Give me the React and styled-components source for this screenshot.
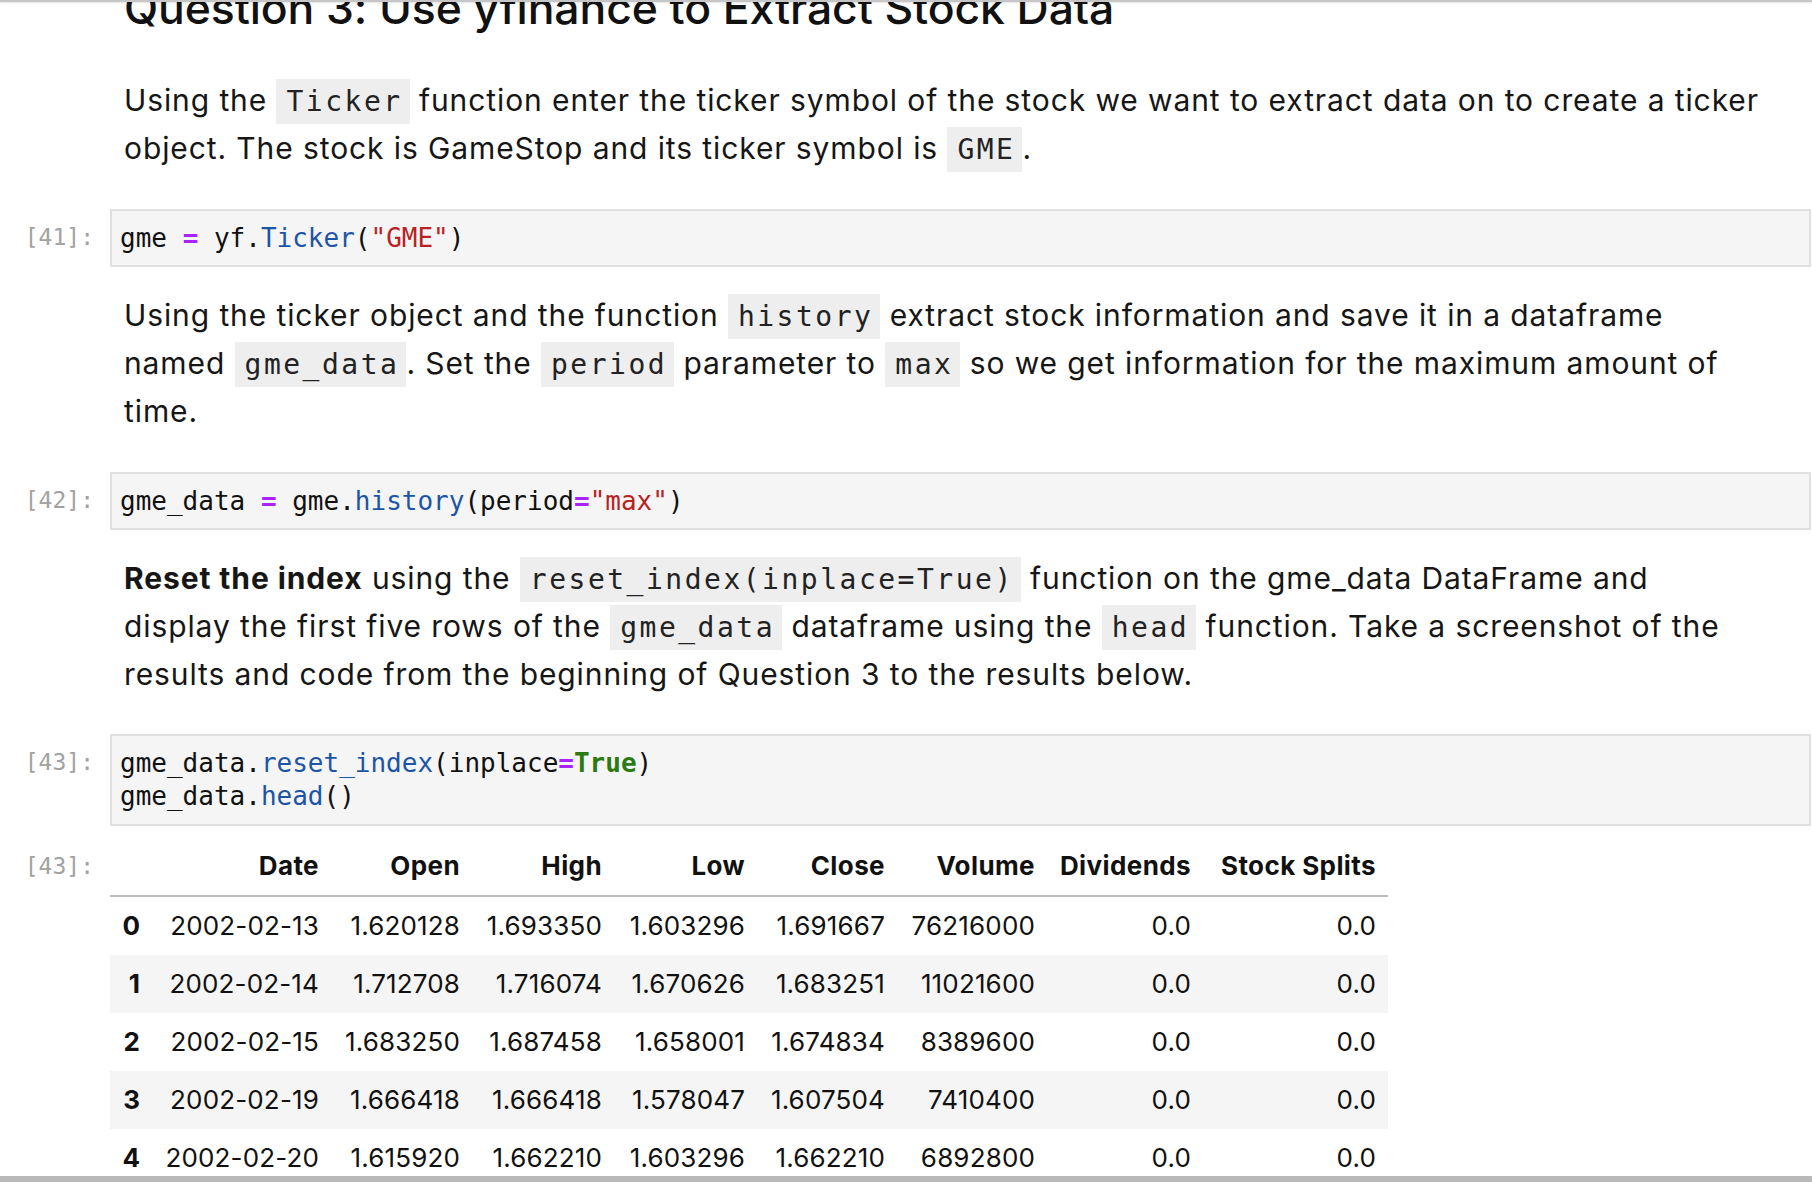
import React from 'react';
import styled, { createGlobalStyle } from 'styled-components';

const GlobalStyle = createGlobalStyle`
  html, body {
    margin: 0;
    padding: 0;
    background: #ffffff;
  }
  body {
    font-family: Inter, "Noto Sans", sans-serif;
    color: #161616;
  }
`;

const Page = styled.div`
  width: 1812px;
  height: 1182px;
  display: flex;
  flex-direction: column;
  overflow: hidden;
  background: #ffffff;
`;

const TopEdge = styled.div`
  flex: 0 0 2px;
  background: #c6c6c6;
  box-shadow: 0 1px 2px rgba(0, 0, 0, 0.12);
  position: relative;
  z-index: 1;
`;

const BottomEdge = styled.div`
  flex: 0 0 6px;
  background: #b9b9b9;
  position: relative;
  z-index: 1;
`;

const Notebook = styled.div`
  flex: 1;
  overflow: hidden;
  padding-right: 1px;
`;

const Stack = styled.div`
  margin-top: -21px;
  display: flex;
  flex-direction: column;
`;

const Cell = styled.div`
  display: grid;
  grid-template-columns: 110px 1fr;
  align-items: start;
  padding-top: ${(p) => p.$top || 0}px;
  padding-bottom: ${(p) => p.$bottom || 0}px;
`;

const Prompt = styled.div`
  font-family: "DejaVu Sans Mono", monospace;
  font-size: 23px;
  line-height: 32px;
  color: #a2a2a2;
  text-align: right;
  padding-right: 16px;
  padding-top: ${(p) => p.$offset || 0}px;
  white-space: nowrap;
`;

const Markdown = styled.div`
  padding-left: 14px;
  white-space: nowrap;
`;

const Heading = styled.h2`
  margin: 0 0 40px 0;
  font-size: 44.5px;
  line-height: 55px;
  font-weight: 500;
  color: #111;
  letter-spacing: -0.1px;
`;

const Para = styled.p`
  margin: 0;
  font-size: 30px;
  line-height: 48px;
  letter-spacing: 0.9px;
  color: #161616;
`;

const Strong = styled.strong`
  font-weight: 700;
`;

const Chip = styled.code`
  font-family: "DejaVu Sans Mono", monospace;
  font-size: 28px;
  line-height: 30px;
  letter-spacing: 2.5px;
  background: #eeeeee;
  padding: 6px 7px 6px 10px;
  color: #222;
`;

const CodeBox = styled.pre`
  margin: 0;
  background: #f5f5f5;
  border: 2px solid #e0e0e0;
  padding: 10.5px 8px 10px 8px;
  font-family: "DejaVu Sans Mono", monospace;
  font-size: 26px;
  line-height: 33.5px;
  color: #111;
`;

const tokenColors = {
  op: '#aa22ff',
  fn: '#1c55a6',
  str: '#ba2121',
  kw: '#2c7a12',
};

const Tok = styled.span`
  color: ${(p) => tokenColors[p.$k] || '#111'};
  font-weight: ${(p) => (p.$k === 'op' || p.$k === 'kw' ? 700 : 400)};
`;

const Table = styled.table`
  border-collapse: collapse;
  table-layout: fixed;
  width: 1278px;
  font-family: Inter, "Noto Sans", sans-serif;
  font-size: 26px;
  color: #111;
`;

const Col = styled.col`
  width: ${(p) => p.$w}px;
`;

const HeadCell = styled.th`
  height: 58px;
  padding: 0 12px;
  text-align: right;
  font-weight: 700;
  letter-spacing: 0.4px;
  white-space: nowrap;
  border-bottom: 2px solid #bdbdbd;
  vertical-align: middle;
`;

const Row = styled.tr`
  background: ${(p) => (p.$odd ? '#f5f5f5' : '#ffffff')};
`;

const IndexCell = styled.th`
  height: 58px;
  padding: 0 12px;
  text-align: right;
  font-weight: 700;
  vertical-align: middle;
`;

const DataCell = styled.td`
  height: 58px;
  padding: 0 12px;
  text-align: right;
  letter-spacing: 0.15px;
  white-space: nowrap;
  vertical-align: middle;
`;

const columns = [
  { name: '', w: 42 },
  { name: 'Date', w: 179 },
  { name: 'Open', w: 141 },
  { name: 'High', w: 142 },
  { name: 'Low', w: 143 },
  { name: 'Close', w: 140 },
  { name: 'Volume', w: 150 },
  { name: 'Dividends', w: 156 },
  { name: 'Stock Splits', w: 185 },
];

const rows = [
  ['2002-02-13', '1.620128', '1.693350', '1.603296', '1.691667', '76216000', '0.0', '0.0'],
  ['2002-02-14', '1.712708', '1.716074', '1.670626', '1.683251', '11021600', '0.0', '0.0'],
  ['2002-02-15', '1.683250', '1.687458', '1.658001', '1.674834', '8389600', '0.0', '0.0'],
  ['2002-02-19', '1.666418', '1.666418', '1.578047', '1.607504', '7410400', '0.0', '0.0'],
  ['2002-02-20', '1.615920', '1.662210', '1.603296', '1.662210', '6892800', '0.0', '0.0'],
];

function DataFrame() {
  return (
    <Table>
      <colgroup>
        {columns.map((c, i) => (
          <Col key={i} $w={c.w} />
        ))}
      </colgroup>
      <thead>
        <tr>
          {columns.map((c, i) => (
            <HeadCell key={i}>{c.name}</HeadCell>
          ))}
        </tr>
      </thead>
      <tbody>
        {rows.map((r, i) => (
          <Row key={i} $odd={i % 2 === 1}>
            <IndexCell>{i}</IndexCell>
            {r.map((v, j) => (
              <DataCell key={j}>{v}</DataCell>
            ))}
          </Row>
        ))}
      </tbody>
    </Table>
  );
}

export default function App() {
  return (
    <Page>
      <GlobalStyle />
      <TopEdge />
      <Notebook>
        <Stack>
          <Cell $bottom={37}>
            <div />
            <Markdown>
              <Heading>Question 3: Use yfinance to Extract Stock Data</Heading>
              <Para>
                Using the <Chip>Ticker</Chip> function enter the ticker symbol of the stock we want to extract data on to create a ticker
                <br />
                object. The stock is GameStop and its ticker symbol is <Chip>GME</Chip>.
              </Para>
            </Markdown>
          </Cell>

          <Cell>
            <Prompt $offset={12}>[41]:</Prompt>
            <CodeBox>
              gme <Tok $k="op">=</Tok> yf.<Tok $k="fn">Ticker</Tok>(<Tok $k="str">"GME"</Tok>)
            </CodeBox>
          </Cell>

          <Cell $top={24} $bottom={37}>
            <div />
            <Markdown>
              <Para>
                Using the ticker object and the function <Chip>history</Chip> extract stock information and save it in a dataframe
                <br />
                named <Chip>gme_data</Chip>. Set the <Chip>period</Chip> parameter to <Chip>max</Chip> so we get information for the maximum amount of
                <br />
                time.
              </Para>
            </Markdown>
          </Cell>

          <Cell>
            <Prompt $offset={12}>[42]:</Prompt>
            <CodeBox>
              gme_data <Tok $k="op">=</Tok> gme.<Tok $k="fn">history</Tok>(period<Tok $k="op">=</Tok>
              <Tok $k="str">"max"</Tok>)
            </CodeBox>
          </Cell>

          <Cell $top={24} $bottom={36}>
            <div />
            <Markdown>
              <Para>
                <Strong>Reset the index</Strong> using the <Chip>reset_index(inplace=True)</Chip> function on the gme_data DataFrame and
                <br />
                display the first five rows of the <Chip>gme_data</Chip> dataframe using the <Chip>head</Chip> function. Take a screenshot of the
                <br />
                results and code from the beginning of Question 3 to the results below.
              </Para>
            </Markdown>
          </Cell>

          <Cell>
            <Prompt $offset={12}>[43]:</Prompt>
            <CodeBox>
              gme_data.<Tok $k="fn">reset_index</Tok>(inplace<Tok $k="op">=</Tok>
              <Tok $k="kw">True</Tok>){'\n'}gme_data.<Tok $k="fn">head</Tok>()
            </CodeBox>
          </Cell>

          <Cell $top={11}>
            <Prompt $offset={13}>[43]:</Prompt>
            <DataFrame />
          </Cell>
        </Stack>
      </Notebook>
      <BottomEdge />
    </Page>
  );
}
